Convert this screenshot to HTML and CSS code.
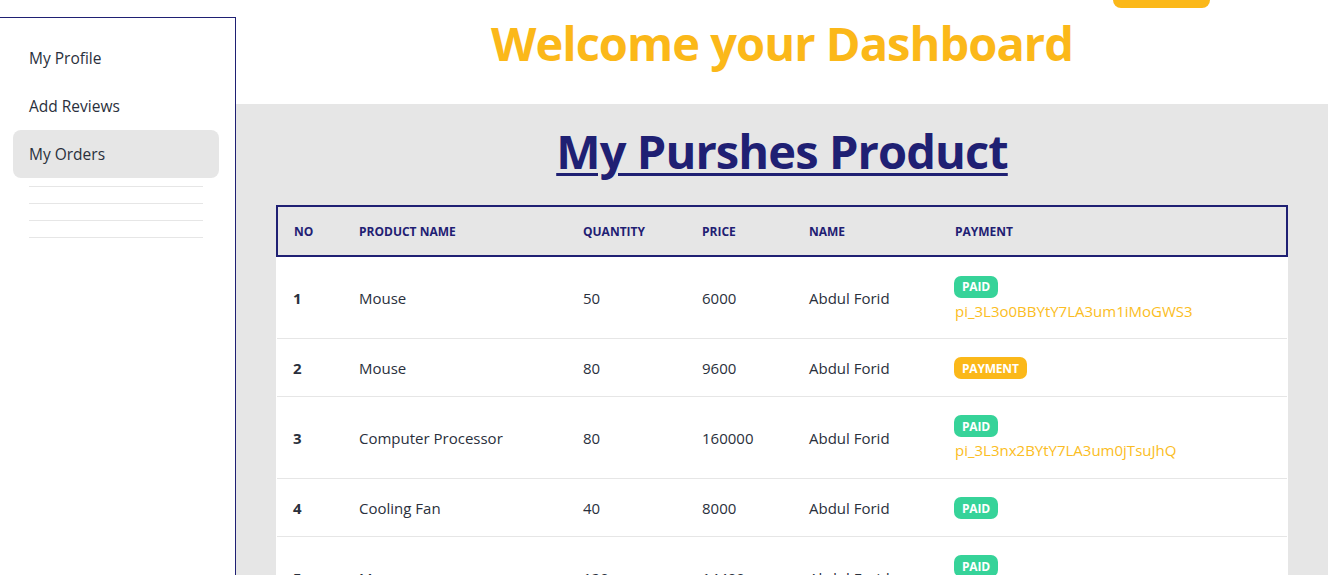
FILE: index.html
```html
<!DOCTYPE html>
<html lang="en">
<head>
<meta charset="utf-8">
<title>Dashboard</title>
<link rel="stylesheet" href="styles.css">
</head>
<body>
<div class="layout">
  <aside class="sidebar">
    <ul class="menu">
      <li><a class="menu-item">My Profile</a></li>
      <li><a class="menu-item">Add Reviews</a></li>
      <li><a class="menu-item active">My Orders</a></li>
    </ul>
    <div class="empty-lines">
      <div class="empty-line"></div>
      <div class="empty-line"></div>
      <div class="empty-line"></div>
      <div class="empty-line"></div>
    </div>
  </aside>
  <main class="main">
    <header class="header">
      <div class="header-bar"><button class="top-btn">Logout</button></div>
      <h1 class="welcome">Welcome your Dashboard</h1>
    </header>
    <section class="content">
      <h2 class="page-title">My Purshes Product</h2>
      <table class="orders">
        <colgroup>
          <col class="c-no"><col class="c-prod"><col class="c-qty"><col class="c-price"><col class="c-name"><col class="c-pay">
        </colgroup>
        <thead>
          <tr>
            <th>No</th><th>Product Name</th><th>Quantity</th><th>Price</th><th>Name</th><th>Payment</th>
          </tr>
        </thead>
        <tbody>
          <tr class="tall">
            <td class="num">1</td><td>Mouse</td><td>50</td><td>6000</td><td>Abdul Forid</td>
            <td><span class="badge paid">PAID</span><div class="txn">pi_3L3o0BBYtY7LA3um1iMoGWS3</div></td>
          </tr>
          <tr>
            <td class="num">2</td><td>Mouse</td><td>80</td><td>9600</td><td>Abdul Forid</td>
            <td><span class="badge pay">PAYMENT</span></td>
          </tr>
          <tr class="tall">
            <td class="num">3</td><td>Computer Processor</td><td>80</td><td>160000</td><td>Abdul Forid</td>
            <td><span class="badge paid">PAID</span><div class="txn">pi_3L3nx2BYtY7LA3um0jTsuJhQ</div></td>
          </tr>
          <tr>
            <td class="num">4</td><td>Cooling Fan</td><td>40</td><td>8000</td><td>Abdul Forid</td>
            <td><span class="badge paid">PAID</span></td>
          </tr>
          <tr class="tall">
            <td class="num">5</td><td>Mouse</td><td>120</td><td>14400</td><td>Abdul Forid</td>
            <td><span class="badge paid">PAID</span><div class="txn">pi_3L3nwXBYtY7LA3um1kQpLzRe</div></td>
          </tr>
        </tbody>
      </table>
    </section>
  </main>
</div>
</body>
</html>
```
FILE: styles.css
```css
* { box-sizing: border-box; }
html, body { margin: 0; padding: 0; }
body {
  font-family: "Open Sans", "Noto Sans", sans-serif;
  color: #1f2937;
  background: #ffffff;
  overflow: hidden;
  height: 575px;
}
.layout {
  display: grid;
  grid-template-columns: 236px 1092px 1px;
  height: 575px;
}
.sidebar {
  margin-top: 17px;
  border-top: 1px solid #1f2073;
  border-right: 1px solid #1f2073;
  padding: 16px 16px 0 13px;
}
.menu {
  list-style: none;
  margin: 0;
  padding: 0;
}
.menu-item {
  display: flex;
  align-items: center;
  height: 48px;
  padding-left: 16px;
  border-radius: 8px;
  font-size: 15.5px;
  color: #2a303c;
}
.menu-item.active { background: #e6e6e6; }
.empty-lines {
  margin: 8px 0 0 16px;
  width: 174px;
}
.empty-line {
  height: 17px;
  border-top: 1px solid #e6e6e6;
}
.main {
  display: flex;
  flex-direction: column;
  min-width: 0;
}
.header {
  height: 104px;
  background: #ffffff;
  display: flex;
  flex-direction: column;
  align-items: center;
}
.header-bar {
  width: 100%;
  display: flex;
  justify-content: flex-end;
  padding-right: 118px;
  height: 8px;
}
.top-btn {
  margin-top: -40px;
  width: 97px;
  height: 48px;
  border: none;
  border-radius: 8px;
  background: #fbb819;
  color: #1f2937;
  font: 600 14px "Open Sans", sans-serif;
}
.welcome {
  margin: 3px 0 0;
  font-size: 47px;
  line-height: 64px;
  font-weight: 700;
  color: #fbb819;
  letter-spacing: -0.95px;
}
.content {
  flex: 1;
  background: #e6e6e6;
  padding: 0 40px;
}
.page-title {
  margin: 15px 0 0;
  text-align: center;
  font-size: 47px;
  line-height: 64px;
  font-weight: 700;
  color: #1f2073;
  text-decoration: underline;
  text-decoration-thickness: 3px;
  text-underline-offset: 4px;
  letter-spacing: -0.9px;
}
.orders {
  margin-top: 22px;
  width: 1010px;
  border-collapse: collapse;
  table-layout: fixed;
  background: #ffffff;
}
.c-no { width: 66px; }
.c-prod { width: 224px; }
.c-qty { width: 119px; }
.c-price { width: 107px; }
.c-name { width: 146px; }
.c-pay { width: 348px; }
.orders thead tr {
  border: 2px solid #1f2073;
  background: #e6e6e6;
}
.orders th {
  height: 50px;
  padding: 0 16px;
  text-align: left;
  font-size: 12px;
  font-weight: 700;
  text-transform: uppercase;
  color: #1f2073;
}
.orders td {
  height: 58px;
  padding: 2px 16px 0;
  font-size: 15px;
  color: #2a303c;
  border-bottom: 1px solid #e6e6e6;
}
.orders tr.tall td { height: 82px; }
.orders td.num { font-weight: 700; }
.badge {
  display: inline-flex;
  align-items: center;
  justify-content: center;
  height: 22px;
  padding: 0 8px;
  margin-left: -1px;
  border-radius: 7px;
  color: #ffffff;
  font-size: 12px;
  font-weight: 700;
  letter-spacing: -0.2px;
}
.badge.paid { background: #36d399; }
.badge.pay { background: #fbb819; }
.txn {
  margin-top: 2px;
  font-size: 15px;
  line-height: 22px;
  color: #fbbd23;
}
```
